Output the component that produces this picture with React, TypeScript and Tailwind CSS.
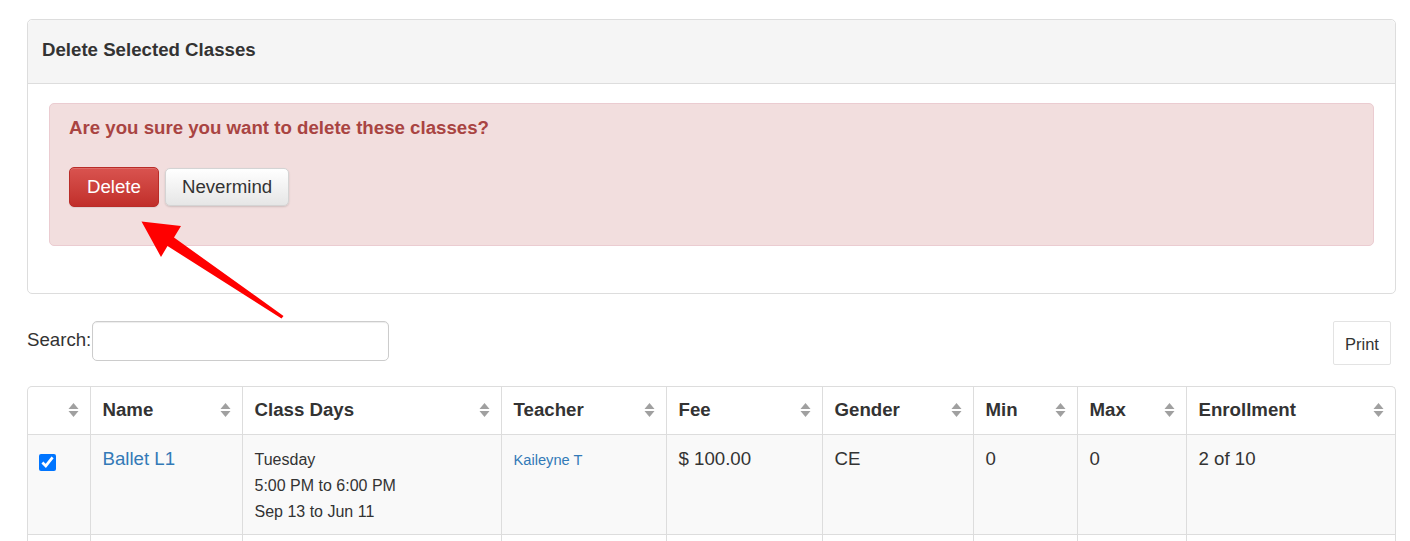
import React from "react";

function SortIcon() {
  return (
    <svg width="11" height="16" viewBox="0 0 11 16" className="shrink-0">
      <polygon points="5.5,1 10.5,7 0.5,7" fill="#a0a0a0" />
      <polygon points="0.5,9 10.5,9 5.5,15" fill="#a0a0a0" />
    </svg>
  );
}

const cols = [
  { label: "", w: "w-[62px]" },
  { label: "Name", w: "w-[152px]" },
  { label: "Class Days", w: "w-[259px]" },
  { label: "Teacher", w: "w-[165px]" },
  { label: "Fee", w: "w-[156px]" },
  { label: "Gender", w: "w-[151px]" },
  { label: "Min", w: "w-[104px]" },
  { label: "Max", w: "w-[109px]" },
  { label: "Enrollment", w: "" },
];

export default function App() {
  return (
    <div
      className="relative w-[1410px] h-[541px] overflow-hidden bg-white pl-[27px] pr-[14px] pt-[19px] text-[#333]"
      style={{ fontFamily: '"Liberation Sans", Arial, sans-serif' }}
    >
      {/* Panel */}
      <div className="border border-[#ddd] rounded-[5px] bg-white">
        <div className="bg-[#f5f5f5] border-b border-[#ddd] rounded-t-[5px] h-[64px] pb-[4px] flex items-center px-[14px]">
          <h3 className="text-[18.67px] font-bold leading-[26px] text-[#333]">Delete Selected Classes</h3>
        </div>
        <div className="pt-[19px] px-[21px] pb-[47px]">
          <div className="bg-[#f2dede] border border-[#ebccd1] rounded-[5px] pt-[11px] pb-[38px] px-[19px]">
            <p className="text-[18.67px] font-bold leading-[26px] text-[#a94442]">
              Are you sure you want to delete these classes?
            </p>
            <div className="mt-[26px] flex items-center gap-[6px]">
              <button className="h-[40px] px-[17px] rounded-[5px] border border-[#b92c28] bg-gradient-to-b from-[#d9534f] to-[#c12e2a] text-white text-[18.67px] leading-[26px] shadow-[inset_0_1px_0_rgba(255,255,255,0.15),0_1px_1px_rgba(0,0,0,0.075)]">
                Delete
              </button>
              <button className="h-[38px] px-[16px] rounded-[5px] border border-[#d4d4d4] bg-gradient-to-b from-white to-[#e6e6e6] text-[#333] text-[18.67px] leading-[26px] shadow-[0_1px_2px_rgba(0,0,0,0.15)]">
                Nevermind
              </button>
            </div>
          </div>
        </div>
      </div>

      {/* Search row */}
      <div className="mt-[27px] flex items-start justify-between">
        <label className="flex items-center text-[18.67px] leading-[26px] text-[#333]">
          <span className="-mt-[2px]">Search:</span>
          <input
            type="text"
            className="ml-px w-[297px] h-[40px] border border-[#ccc] rounded-[5px] px-3 outline-none shadow-[inset_0_1px_1px_rgba(0,0,0,0.075)]"
          />
        </label>
        <button className="mr-[5px] w-[58px] h-[44px] pt-[2px] border border-[#e3e3e3] bg-white text-[16.5px] text-[#333] rounded-[2px]">
          Print
        </button>
      </div>

      {/* Table */}
      <div className="mt-[21px] border border-[#ddd] rounded-t-[5px] border-b-0">
        <table className="w-full table-fixed border-collapse">
          <colgroup>
            {cols.map((c, i) => (
              <col key={i} className={c.w} />
            ))}
          </colgroup>
          <thead>
            <tr>
              {cols.map((c, i) => (
                <th
                  key={i}
                  className={`h-[47px] text-left align-middle border-b border-[#ddd] ${i > 0 ? "border-l" : ""} pl-[12px] pr-[11px]`}
                >
                  <div className="flex items-center justify-between">
                    <span className="text-[18.67px] font-bold leading-[26px] text-[#333]">{c.label}</span>
                    <SortIcon />
                  </div>
                </th>
              ))}
            </tr>
          </thead>
          <tbody>
            <tr className="bg-[#f9f9f9]">
              <td className="h-[100px] align-top border-b border-[#ddd] pl-[11px] pt-[19px]">
                <input type="checkbox" defaultChecked className="block w-[17px] h-[17px] m-0" />
              </td>
              <td className="align-top border-b border-l border-[#ddd] pl-[12px] pt-[11px]">
                <a className="text-[18.67px] leading-[26px] text-[#337ab7]">Ballet L1</a>
              </td>
              <td className="align-top border-b border-l border-[#ddd] pl-[12px] pt-[12px] text-[16px] leading-[26px] text-[#333]">
                <div>Tuesday</div>
                <div>5:00 PM to 6:00 PM</div>
                <div>Sep 13 to Jun 11</div>
              </td>
              <td className="align-top border-b border-l border-[#ddd] pl-[12px] pt-[12px] text-[14.67px] leading-[26px]">
                <a className="text-[#337ab7]">Kaileyne T</a>
              </td>
              <td className="align-top border-b border-l border-[#ddd] pl-[12px] pt-[11px] text-[18.67px] leading-[26px]">
                $ 100.00
              </td>
              <td className="align-top border-b border-l border-[#ddd] pl-[12px] pt-[11px] text-[18.67px] leading-[26px]">
                CE
              </td>
              <td className="align-top border-b border-l border-[#ddd] pl-[12px] pt-[11px] text-[18.67px] leading-[26px]">
                0
              </td>
              <td className="align-top border-b border-l border-[#ddd] pl-[12px] pt-[11px] text-[18.67px] leading-[26px]">
                0
              </td>
              <td className="align-top border-b border-l border-[#ddd] pl-[12px] pt-[11px] text-[18.67px] leading-[26px]">
                2 of 10
              </td>
            </tr>
            <tr>
              {cols.map((c, i) => (
                <td key={i} className={`h-[60px] ${i > 0 ? "border-l" : ""} border-[#ddd]`} />
              ))}
            </tr>
          </tbody>
        </table>
      </div>

      {/* Annotation arrow */}
      <svg
        className="absolute left-0 top-0 pointer-events-none"
        width="1410"
        height="541"
        viewBox="0 0 1410 541"
      >
        <polygon
          points="141.5,221.5 181,226 174,237.5 283.5,316 281.5,318.5 167.5,246 161,257"
          fill="#ff0000"
        />
      </svg>
    </div>
  );
}
